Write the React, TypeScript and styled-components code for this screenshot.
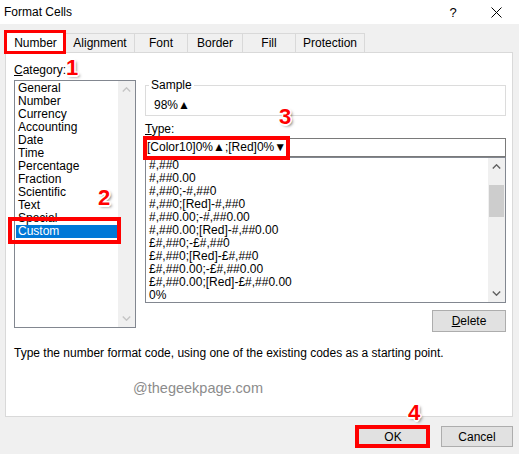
import React from "react";
import styled, { createGlobalStyle, css } from "styled-components";

const GlobalStyle = createGlobalStyle`
  html, body {
    margin: 0;
    padding: 0;
  }
  body {
    background: #f0f0f0;
    font-family: "Liberation Sans", Arial, "DejaVu Sans", sans-serif;
    font-size: 12px;
    color: #000;
  }
`;

// red highlight frame drawn around a marked control
const redFrame = (top: number, right: number, bottom: number, left: number, width: number) => css`
  &::after {
    content: "";
    position: absolute;
    top: ${-top}px;
    right: ${-right}px;
    bottom: ${-bottom}px;
    left: ${-left}px;
    border: ${width}px solid #ff0000;
    pointer-events: none;
    z-index: 5;
  }
`;

const Dialog = styled.div`
  position: relative;
  width: 519px;
  height: 454px;
  display: flex;
  flex-direction: column;
  overflow: hidden;
`;

const TitleBar = styled.div`
  height: 24px;
  background: #fff;
  display: flex;
  align-items: center;
  padding-left: 4px;
`;

const Title = styled.span`
  line-height: 14px;
`;

const TitleButtons = styled.div`
  margin-left: auto;
  display: flex;
  height: 100%;
`;

const TitleButton = styled.div<{ $w: number }>`
  width: ${(p) => p.$w}px;
  display: flex;
  align-items: center;
  justify-content: center;
  font-size: 13px;
`;

const TabStrip = styled.div`
  position: relative;
  z-index: 2;
  margin: 7px 0 0 5px;
  height: 21px;
  display: flex;
  align-items: flex-end;
`;

const Tab = styled.div<{ $w: number; $active?: boolean; $marked?: boolean }>`
  position: relative;
  box-sizing: border-box;
  width: ${(p) => p.$w}px;
  height: 19px;
  border: 1px solid #d9d9d9;
  border-bottom: none;
  border-left: none;
  background: #f0f0f0;
  display: flex;
  align-items: center;
  justify-content: center;
  line-height: 14px;
  ${(p) =>
    p.$active &&
    css`
      height: 22px;
      margin-bottom: -1px;
      background: #fff;
      border-left: 1px solid #d9d9d9;
    `}
  ${(p) => p.$marked && redFrame(2, 1, 1, 2, 3)}
`;

const Panel = styled.div`
  position: relative;
  z-index: 1;
  box-sizing: border-box;
  margin-left: 5px;
  width: 508px;
  height: 365px;
  background: #fff;
  border: 1px solid #d9d9d9;
  padding: 10px 6px 0 8px;
  display: flex;
  flex-direction: column;
`;

const Columns = styled.div`
  display: flex;
  gap: 9px;
  align-items: flex-start;
`;

const LeftColumn = styled.div`
  width: 122px;
  display: flex;
  flex-direction: column;
`;

const RightColumn = styled.div`
  width: 361px;
  display: flex;
  flex-direction: column;
  padding-top: 15px;
`;

const FieldLabel = styled.div<{ $gap?: number }>`
  line-height: 14px;
  margin-top: ${(p) => p.$gap ?? 0}px;
`;

const ListBox = styled.div<{ $h: number; $gap?: number }>`
  box-sizing: border-box;
  height: ${(p) => p.$h}px;
  margin-top: ${(p) => p.$gap ?? 0}px;
  border: 1px solid #828790;
  display: flex;
  background: #fff;
`;

const Options = styled.div`
  flex: 1;
  padding: 1px 1px 0;
  display: flex;
  flex-direction: column;
`;

const Option = styled.div<{ $selected?: boolean; $marked?: boolean }>`
  position: relative;
  height: 13px;
  line-height: 13px;
  padding-left: 2px;
  white-space: nowrap;
  ${(p) =>
    p.$selected &&
    css`
      background: #0078d7;
      color: #fff;
    `}
  ${(p) => p.$marked && redFrame(8, 4, 6, 8, 4)}
`;

const ScrollBar = styled.div`
  width: 17px;
  background: #f0f0f0;
  display: flex;
  flex-direction: column;
`;

const ScrollArrow = styled.div`
  height: 17px;
  display: flex;
  align-items: center;
  justify-content: center;
`;

const Track = styled.div`
  flex: 1;
`;

const Thumb = styled.div`
  margin: 10px 1px 0;
  height: 32px;
  background: #cdcdcd;
`;

const SampleBox = styled.fieldset`
  margin: 0;
  padding: 0 0 0 3px;
  min-width: 0;
  border: 1px solid #dcdcdc;
`;

const SampleLegend = styled.legend`
  padding: 0 2px;
  line-height: 14px;
`;

const SampleValue = styled.div`
  box-sizing: border-box;
  height: 23px;
  padding: 6px 0 0 5px;
  line-height: 14px;
`;

const TypeField = styled.div`
  position: relative;
  box-sizing: border-box;
  margin-top: 2px;
  height: 19px;
  border: 1px solid #7a7a7a;
  padding-left: 1px;
  line-height: 17px;
  white-space: nowrap;

  &::after {
    content: "";
    position: absolute;
    top: -3px;
    left: -3px;
    width: 147px;
    height: 24px;
    box-sizing: border-box;
    border: 4px solid #ff0000;
    z-index: 5;
  }
`;

const Button = styled.button<{ $w: number; $h: number; $primary?: boolean; $marked?: boolean }>`
  position: relative;
  box-sizing: border-box;
  width: ${(p) => p.$w}px;
  height: ${(p) => p.$h}px;
  padding: 0;
  border: 1px solid ${(p) => (p.$primary ? "#0078d7" : "#adadad")};
  background: #e1e1e1;
  font-family: inherit;
  font-size: 12px;
  color: #000;
  ${(p) => p.$marked && redFrame(2, 2, 2, 3, 4)}
`;

const DeleteRow = styled.div`
  display: flex;
  justify-content: flex-end;
  margin-top: 7px;
`;

const Hint = styled.div`
  margin-top: 14px;
  line-height: 14px;
`;

const Watermark = styled.div`
  margin: 19px 0 0 119px;
  font-size: 14.5px;
  line-height: 18px;
  color: #8c8c8c;
`;

const Footer = styled.div`
  display: flex;
  justify-content: flex-end;
  gap: 12px;
  margin: 9px 6px 0 0;
`;

const Callout = styled.div<{ $x: number; $y: number }>`
  position: absolute;
  left: ${(p) => p.$x}px;
  top: ${(p) => p.$y}px;
  z-index: 10;
  font-family: "Liberation Sans", Arial, sans-serif;
  font-weight: bold;
  font-size: 22px;
  line-height: 22px;
  color: #ff0000;
  text-shadow: 1.5px 0 0 #fff, -1.5px 0 0 #fff, 0 1.5px 0 #fff, 0 -1.5px 0 #fff,
    1px 1px 0 #fff, -1px -1px 0 #fff, 1px -1px 0 #fff, -1px 1px 0 #fff,
    2px 2px 3px rgba(0, 0, 0, 0.55);
`;

const Chevron = ({ up, color }: { up?: boolean; color: string }) => (
  <svg width="9" height="5" viewBox="0 0 9 5">
    <polyline
      points={up ? "0.8,4.4 4.5,0.8 8.2,4.4" : "0.8,0.6 4.5,4.2 8.2,0.6"}
      fill="none"
      stroke={color}
      strokeWidth="1.4"
    />
  </svg>
);

const CloseIcon = () => (
  <svg width="11" height="11" viewBox="0 0 11 11">
    <path d="M0.5 0.5 L10.5 10.5 M10.5 0.5 L0.5 10.5" stroke="#000" strokeWidth="1" />
  </svg>
);

const tabs = [
  { label: "Number", w: 61 },
  { label: "Alignment", w: 69 },
  { label: "Font", w: 53 },
  { label: "Border", w: 55 },
  { label: "Fill", w: 53 },
  { label: "Protection", w: 69 },
];

const categories = [
  "General",
  "Number",
  "Currency",
  "Accounting",
  "Date",
  "Time",
  "Percentage",
  "Fraction",
  "Scientific",
  "Text",
  "Special",
  "Custom",
];

const formats = [
  "#,##0",
  "#,##0.00",
  "#,##0;-#,##0",
  "#,##0;[Red]-#,##0",
  "#,##0.00;-#,##0.00",
  "#,##0.00;[Red]-#,##0.00",
  "£#,##0;-£#,##0",
  "£#,##0;[Red]-£#,##0",
  "£#,##0.00;-£#,##0.00",
  "£#,##0.00;[Red]-£#,##0.00",
  "0%",
];

export default function App() {
  return (
    <Dialog>
      <GlobalStyle />
      <TitleBar>
        <Title>Format Cells</Title>
        <TitleButtons>
          <TitleButton $w={40}>?</TitleButton>
          <TitleButton $w={46}>
            <CloseIcon />
          </TitleButton>
        </TitleButtons>
      </TitleBar>

      <TabStrip>
        {tabs.map((t, i) => (
          <Tab key={t.label} $w={t.w} $active={i === 0} $marked={i === 0}>
            {t.label}
          </Tab>
        ))}
      </TabStrip>

      <Panel>
        <Columns>
          <LeftColumn>
            <FieldLabel>
              <u>C</u>ategory:
            </FieldLabel>
            <ListBox $h={248} $gap={3}>
              <Options>
                {categories.map((c) => (
                  <Option key={c} $selected={c === "Custom"} $marked={c === "Custom"}>
                    {c}
                  </Option>
                ))}
              </Options>
              <ScrollBar>
                <ScrollArrow>
                  <Chevron up color="#c5c5c5" />
                </ScrollArrow>
                <Track />
                <ScrollArrow>
                  <Chevron color="#c5c5c5" />
                </ScrollArrow>
              </ScrollBar>
            </ListBox>
          </LeftColumn>

          <RightColumn>
            <SampleBox>
              <SampleLegend>Sample</SampleLegend>
              <SampleValue>98%▲</SampleValue>
            </SampleBox>
            <FieldLabel $gap={6}>
              <u>T</u>ype:
            </FieldLabel>
            <TypeField>[Color10]0%▲;[Red]0%▼</TypeField>
            <ListBox $h={146}>
              <Options>
                {formats.map((f) => (
                  <Option key={f}>{f}</Option>
                ))}
              </Options>
              <ScrollBar>
                <ScrollArrow>
                  <Chevron up color="#606060" />
                </ScrollArrow>
                <Track>
                  <Thumb />
                </Track>
                <ScrollArrow>
                  <Chevron color="#606060" />
                </ScrollArrow>
              </ScrollBar>
            </ListBox>
            <DeleteRow>
              <Button $w={74} $h={22}>
                <u>D</u>elete
              </Button>
            </DeleteRow>
          </RightColumn>
        </Columns>

        <Hint>Type the number format code, using one of the existing codes as a starting point.</Hint>
        <Watermark>@thegeekpage.com</Watermark>
      </Panel>

      <Footer>
        <Button $w={72} $h={21} $primary $marked>
          OK
        </Button>
        <Button $w={72} $h={21}>
          Cancel
        </Button>
      </Footer>

      <Callout $x={66} $y={57}>1</Callout>
      <Callout $x={98} $y={187}>2</Callout>
      <Callout $x={279} $y={106}>3</Callout>
      <Callout $x={408} $y={402}>4</Callout>
    </Dialog>
  );
}
